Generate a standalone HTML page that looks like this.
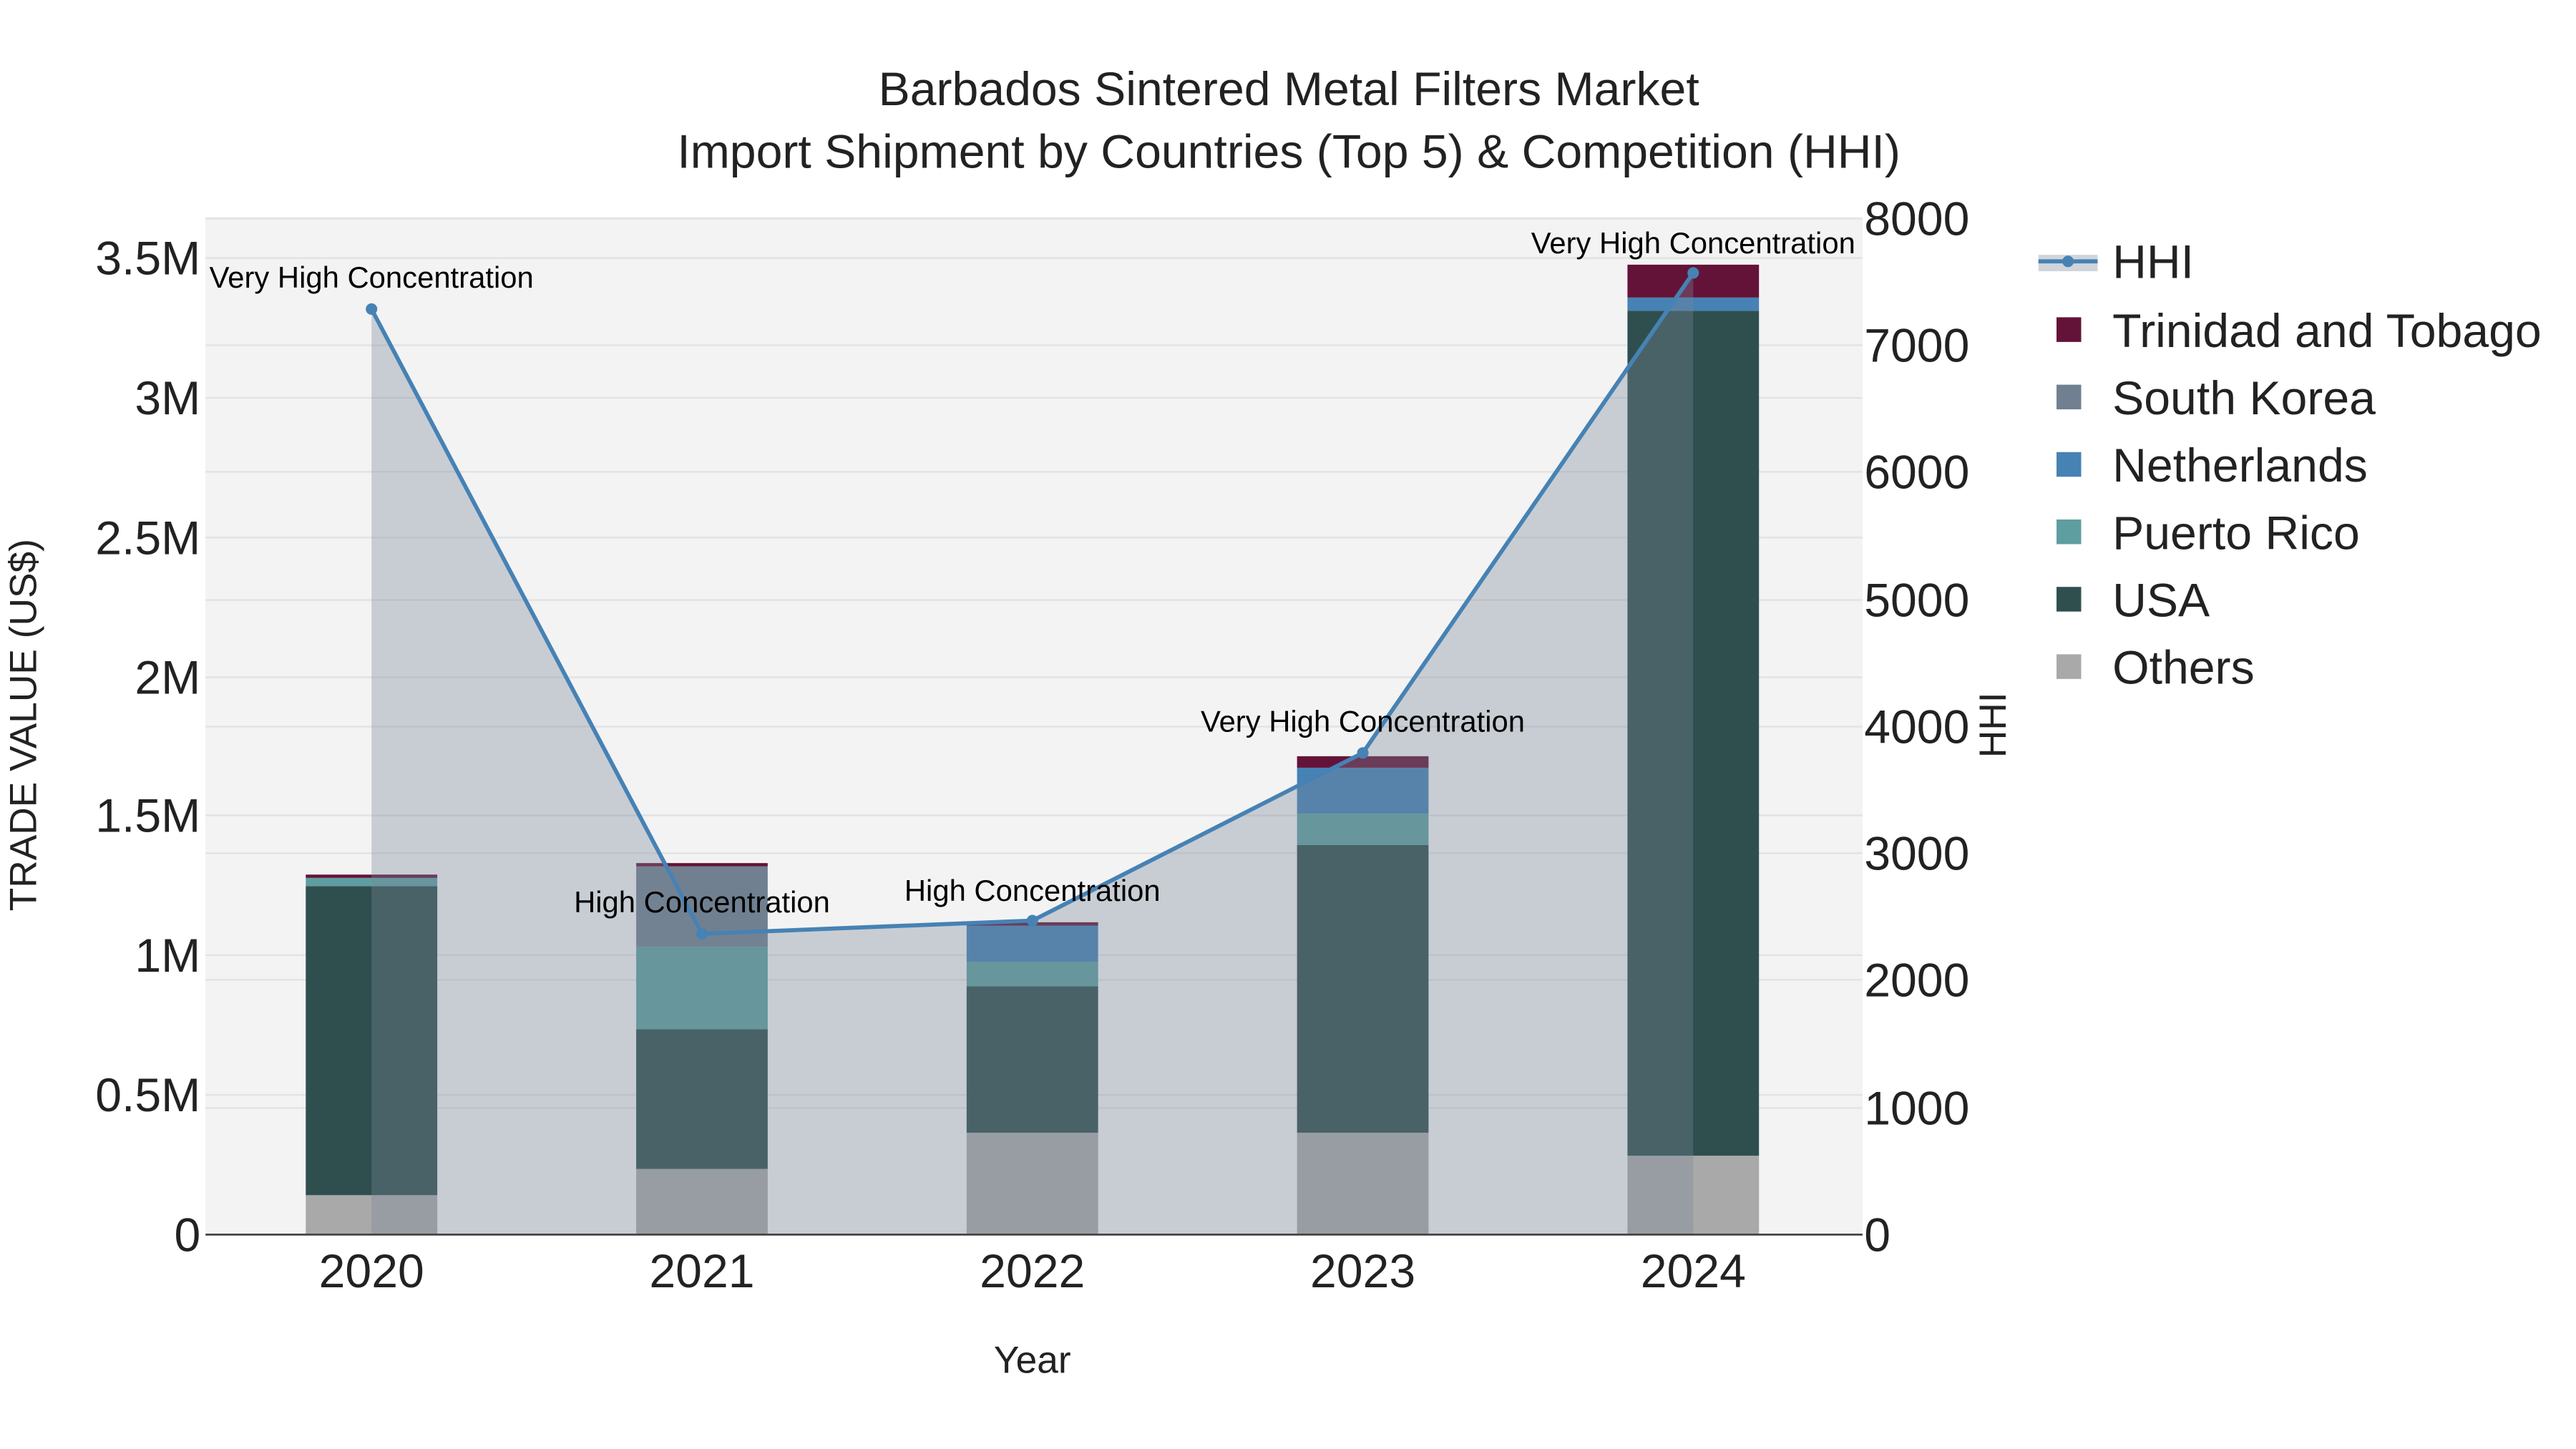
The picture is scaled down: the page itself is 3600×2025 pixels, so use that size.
<!DOCTYPE html>
<html><head><meta charset="utf-8"><style>html,body{margin:0;padding:0;background:#fff}svg{display:block}text{font-family:"Liberation Sans",Arial,sans-serif}</style></head>
<body>
<svg width="3600" height="2025" viewBox="0 0 1567 881.4" preserveAspectRatio="none" xmlns="http://www.w3.org/2000/svg">
<rect x="0" y="0" width="1567" height="881.4" fill="#fff"/>
<rect x="125" y="132" width="1008" height="619" fill="#f3f3f3"/>
<g stroke="#e2e2e2" stroke-width="1">
<line x1="125" x2="1133" y1="666" y2="666"/><line x1="125" x2="1133" y1="581" y2="581"/><line x1="125" x2="1133" y1="496" y2="496"/><line x1="125" x2="1133" y1="412" y2="412"/><line x1="125" x2="1133" y1="327" y2="327"/><line x1="125" x2="1133" y1="242" y2="242"/><line x1="125" x2="1133" y1="157" y2="157"/>
<line x1="125" x2="1133" y1="674" y2="674"/><line x1="125" x2="1133" y1="596" y2="596"/><line x1="125" x2="1133" y1="519" y2="519"/><line x1="125" x2="1133" y1="442" y2="442"/><line x1="125" x2="1133" y1="365" y2="365"/><line x1="125" x2="1133" y1="287" y2="287"/><line x1="125" x2="1133" y1="210" y2="210"/><line x1="125" x2="1133" y1="133" y2="133"/>
</g>
<g>
<rect x="186" y="727" width="80" height="24" fill="#a9a9a9"/>
<rect x="186" y="539" width="80" height="188" fill="#2f4f4f"/>
<rect x="186" y="534" width="80" height="5" fill="#5f9ea0"/>
<rect x="186" y="532" width="80" height="2" fill="#641338"/>

<rect x="387" y="711" width="80" height="40" fill="#a9a9a9"/>
<rect x="387" y="626" width="80" height="85" fill="#2f4f4f"/>
<rect x="387" y="576" width="80" height="50" fill="#5f9ea0"/>
<rect x="387" y="527" width="80" height="49" fill="#708090"/>
<rect x="387" y="525" width="80" height="2" fill="#641338"/>

<rect x="588" y="689" width="80" height="62" fill="#a9a9a9"/>
<rect x="588" y="600" width="80" height="89" fill="#2f4f4f"/>
<rect x="588" y="585" width="80" height="15" fill="#5f9ea0"/>
<rect x="588" y="563" width="80" height="22" fill="#4682b4"/>
<rect x="588" y="561" width="80" height="2" fill="#641338"/>

<rect x="789" y="689" width="80" height="62" fill="#a9a9a9"/>
<rect x="789" y="514" width="80" height="175" fill="#2f4f4f"/>
<rect x="789" y="495" width="80" height="19" fill="#5f9ea0"/>
<rect x="789" y="467" width="80" height="28" fill="#4682b4"/>
<rect x="789" y="460" width="80" height="7" fill="#641338"/>

<rect x="990" y="703" width="80" height="48" fill="#a9a9a9"/>
<rect x="990" y="189" width="80" height="514" fill="#2f4f4f"/>
<rect x="990" y="181" width="80" height="8" fill="#4682b4"/>
<rect x="990" y="161" width="80" height="20" fill="#641338"/>
</g>
<polygon points="226,751 226,188 427,568 628,560 829,458 1030,166 1030,751" fill="rgba(119,136,153,0.35)"/>
<polyline points="226,188 427,568 628,560 829,458 1030,166" fill="none" stroke="#4682b4" stroke-width="2.5"/>
<g fill="#4682b4"><circle cx="226" cy="188" r="3.5"/><circle cx="427" cy="568" r="3.5"/><circle cx="628" cy="560" r="3.5"/><circle cx="829" cy="458" r="3.5"/><circle cx="1030" cy="166" r="3.5"/></g>
<line x1="125" x2="1133" y1="751" y2="751" stroke="#444" stroke-width="1.2"/>
<g font-size="18.2" fill="#000" text-anchor="middle">
<text x="226" y="175">Very High Concentration</text>
<text x="427" y="555">High Concentration</text>
<text x="628" y="548">High Concentration</text>
<text x="829" y="445">Very High Concentration</text>
<text x="1030" y="154">Very High Concentration</text>
</g>
<g font-size="28.8" fill="#222" text-anchor="end">
<text x="122" y="761">0</text><text x="122" y="676">0.5M</text><text x="122" y="591">1M</text><text x="122" y="506">1.5M</text><text x="122" y="422">2M</text><text x="122" y="337">2.5M</text><text x="122" y="252">3M</text><text x="122" y="167">3.5M</text>
</g>
<g font-size="28.8" fill="#222" text-anchor="start">
<text x="1134" y="761">0</text><text x="1134" y="684">1000</text><text x="1134" y="606">2000</text><text x="1134" y="529">3000</text><text x="1134" y="452">4000</text><text x="1134" y="375">5000</text><text x="1134" y="297">6000</text><text x="1134" y="220">7000</text><text x="1134" y="143">8000</text>
</g>
<g font-size="28.8" fill="#222" text-anchor="middle">
<text x="226" y="783">2020</text><text x="427" y="783">2021</text><text x="628" y="783">2022</text><text x="829" y="783">2023</text><text x="1030" y="783">2024</text>
</g>
<text x="628" y="835" font-size="23.2" fill="#222" text-anchor="middle">Year</text>
<text transform="translate(22,441) rotate(-90)" font-size="23.2" fill="#222" text-anchor="middle">TRADE VALUE (US$)</text>
<text transform="translate(1220,441) rotate(-90)" font-size="23.2" fill="#222" text-anchor="middle">HHI</text>
<g font-size="28.8" fill="#222" text-anchor="middle">
<text x="784" y="64">Barbados Sintered Metal Filters Market</text>
<text x="784" y="102">Import Shipment by Countries (Top 5) &amp; Competition (HHI)</text>
</g>
<rect x="1240" y="155" width="36" height="10" fill="rgba(119,136,153,0.35)"/>
<line x1="1240" x2="1276" y1="159" y2="159" stroke="#4682b4" stroke-width="2.5"/>
<circle cx="1258" cy="159" r="3.5" fill="#4682b4"/>
<g>
<rect x="1251" y="193" width="15" height="15" fill="#641338"/>
<rect x="1251" y="234" width="15" height="15" fill="#708090"/>
<rect x="1251" y="275" width="15" height="15" fill="#4682b4"/>
<rect x="1251" y="316" width="15" height="15" fill="#5f9ea0"/>
<rect x="1251" y="357" width="15" height="15" fill="#2f4f4f"/>
<rect x="1251" y="398" width="15" height="15" fill="#a9a9a9"/>
</g>
<g font-size="28.8" fill="#222">
<text x="1285" y="169">HHI</text>
<text x="1285" y="211">Trinidad and Tobago</text>
<text x="1285" y="252">South Korea</text>
<text x="1285" y="293">Netherlands</text>
<text x="1285" y="334">Puerto Rico</text>
<text x="1285" y="375">USA</text>
<text x="1285" y="416">Others</text>
</g>
</svg>
</body></html>
